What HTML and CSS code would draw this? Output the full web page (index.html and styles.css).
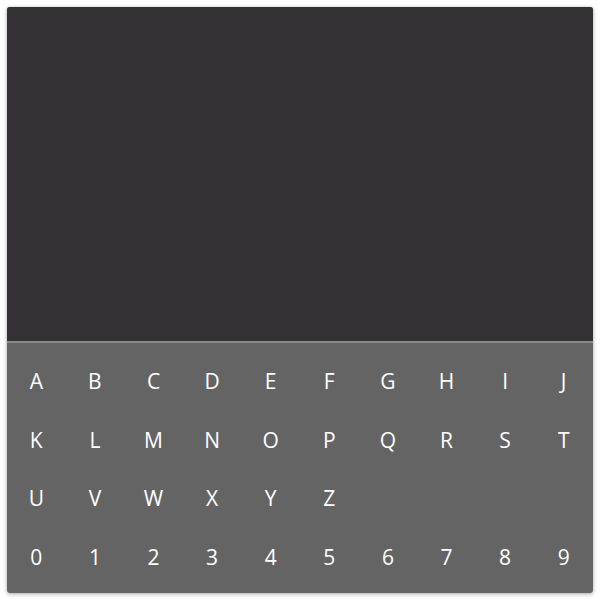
FILE: index.html
```html
<!DOCTYPE html>
<html>
<head>
<meta charset="utf-8">
<link rel="stylesheet" href="styles.css">
</head>
<body>
<div class="card">
  <div class="screen"></div>
  <div class="keyboard">
    <div class="row"><span class="key">A</span><span class="key">B</span><span class="key">C</span><span class="key">D</span><span class="key">E</span><span class="key">F</span><span class="key">G</span><span class="key">H</span><span class="key">I</span><span class="key">J</span></div>
    <div class="row"><span class="key">K</span><span class="key">L</span><span class="key">M</span><span class="key">N</span><span class="key">O</span><span class="key">P</span><span class="key">Q</span><span class="key">R</span><span class="key">S</span><span class="key">T</span></div>
    <div class="row"><span class="key">U</span><span class="key">V</span><span class="key">W</span><span class="key">X</span><span class="key">Y</span><span class="key">Z</span></div>
    <div class="row"><span class="key">0</span><span class="key">1</span><span class="key">2</span><span class="key">3</span><span class="key">4</span><span class="key">5</span><span class="key">6</span><span class="key">7</span><span class="key">8</span><span class="key">9</span></div>
  </div>
</div>
</body>
</html>
```
FILE: styles.css
```css
html, body {
  margin: 0;
  padding: 0;
  background: #ffffff;
}
body {
  padding: 8px;
  font-family: "Open Sans", "DejaVu Sans", sans-serif;
}
.card {
  width: 586px;
  height: 586px;
  margin: -1px;
  border-radius: 3px;
  overflow: hidden;
  box-shadow: 0 1px 4px rgba(0,0,0,0.35);
  display: flex;
  flex-direction: column;
  background: #656465;
}
.screen {
  height: 334px;
  background: #333133;
  border-bottom: 2px solid #8c8b8c;
  flex: none;
}
.keyboard {
  flex: 1;
  display: flex;
  flex-direction: column;
  padding: 9px 0 5px;
}
.row {
  display: grid;
  grid-template-columns: repeat(10, 1fr);
  height: 58.6px;
}
.key {
  display: flex;
  align-items: center;
  justify-content: center;
  color: #ffffff;
  font-size: 21px;
}
```
